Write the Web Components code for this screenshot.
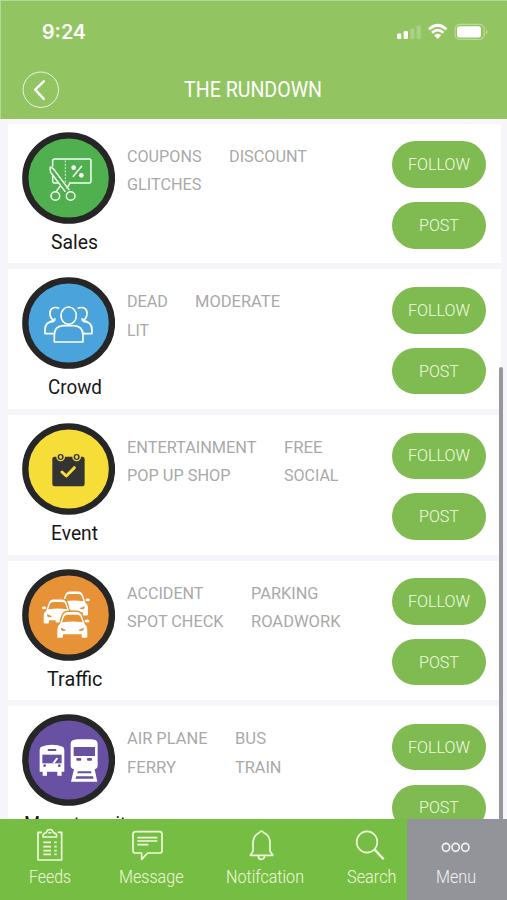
<!DOCTYPE html>
<html lang="en">
<head>
<meta charset="utf-8">
<title>The Rundown</title>
<style>
html,body{margin:0;height:100%;overflow:hidden}
body{font-family:Roboto,"Liberation Sans",sans-serif;background:#f6f6fa}
</style>
</head>
<body>
<rundown-app></rundown-app>
<script>
const define = (name, html, init) => customElements.define(name, class extends HTMLElement {
  connectedCallback() {
    if (this.shadowRoot) return;
    const t = document.createElement('template');
    t.innerHTML = typeof html === 'function' ? html(this) : html;
    this.attachShadow({mode: 'open'}).append(t.content.cloneNode(true));
    if (init) init(this);
  }
});

// A single line of text scaled horizontally to the width in its "w" attribute.
define('fit-text', `<style>
:host{display:block;white-space:nowrap}
span{display:inline-block;transform-origin:0 50%}
</style><span><slot></slot></span>`, el => {
  const w = +el.getAttribute('w'), s = el.shadowRoot.querySelector('span');
  el.style.width = w + 'px';
  s.style.transform = `scaleX(${w / s.getBoundingClientRect().width})`;
});

const badges = {
sales: ['#50b050', '36 20 280 276', `<g fill="none" stroke="#f4fff0" stroke-width="4.5" stroke-linejoin="round" stroke-linecap="round">
<path d="M128 122V107Q128 101 134 101H238Q243 101 243 107V167Q243 173 238 173H178M128 152V166Q128 173 135 173H146"/>
<path d="M166 107V172" stroke-width="3" stroke-dasharray="3 7"/>
<path d="M121 125Q119 132 122 141L165 198M121 125L130 130L177 193M178 177L171 188M152 181L138 199"/>
<circle cx="136" cy="212" r="13"/><circle cx="182" cy="212" r="13"/>
<path d="M215 123L190 153"/></g><circle cx="191" cy="127" r="7" fill="#fff"/><circle cx="214" cy="150" r="7" fill="#fff"/>`],
crowd: ['#4aa3da', '36 20 280 276', `<g fill="#4aa3da" stroke="#fff" stroke-width="5" stroke-linejoin="round">
<g id="side"><path d="M132 153Q105 153 105 178V190H131"/><path d="M148 114C128 106 118 119 120 132Q122 148 136 151"/><path d="M136 144Q131 153 120 154" fill="none"/></g>
<use href="#side" transform="translate(351 0) scale(-1 1)"/>
<path d="M133 215V194Q133 167 161 166H190Q219 167 219 194V215Z"/>
<ellipse cx="176" cy="136" rx="23" ry="26"/></g>`],
event: ['#f7dd38', '36 20 280 276', `<rect x="127" y="121" width="97" height="89" rx="7" fill="#333"/>
<g fill="#333" stroke="#f7dd38" stroke-width="4"><circle cx="152" cy="122" r="11"/><circle cx="200" cy="122" r="11"/></g><rect x="148" y="117" width="8" height="10" rx="3" fill="#f7dd38"/><rect x="196" y="117" width="8" height="10" rx="3" fill="#f7dd38"/>
<path d="M156 167L169 179L193 154" fill="none" stroke="#f7dd38" stroke-width="9" stroke-linecap="round" stroke-linejoin="round"/>`],
traffic: ['#e89237', '36 26 280 276', `<defs><g id="car"><path d="M-37 -2L-29 -26Q-25 -37 -14 -38H14Q25 -37 29 -26L37 -2Q45 3 45 14V36Q45 39 42 39H31Q28 39 28 36V29H-28V36Q-28 39 -31 39H-42Q-45 39 -45 36V14Q-45 3 -37 -2Z" fill="#fff" stroke="#e89237" stroke-width="9" paint-order="stroke"/><ellipse cx="-44" cy="-11" rx="7" ry="4.5" fill="#fff"/><ellipse cx="44" cy="-11" rx="7" ry="4.5" fill="#fff"/><path d="M-31 -7L-24 -25Q-22 -30 -14 -30H14Q22 -30 24 -25L31 -7Q0 -12 -31 -7Z" fill="#e89237"/><path d="M-34 9L-18 16Q-27 22 -34 16ZM34 9L18 16Q27 22 34 16Z" fill="#e89237"/></g></defs>
<use href="#car" transform="translate(192 129) scale(.93)"/>
<use href="#car" transform="translate(143 153) scale(.93)"/>
<use href="#car" transform="translate(187 193)"/>`],
transit: ['#6850a2', '36 42 280 276', `<path d="M92 141Q127 128 160 141L163 149V215H155V227H142V215H111V227H98V215H89V149Z" fill="#fff"/>
<g fill="#6850a2"><rect x="113" y="147" width="26" height="6" rx="2"/><path d="M97 164H155V190H97Z"/><circle cx="104" cy="197" r="4"/><circle cx="148" cy="197" r="4"/></g><path d="M97 190H127L139 173L145 175L134 190" fill="#fff"/>
<path d="M182 131Q182 119 202 118H245Q263 119 263 131V197Q263 205 254 208L262 245H183L192 208Q182 205 182 197Z" fill="#fff"/>
<g fill="#6850a2"><rect x="191" y="141" width="64" height="27"/><rect x="199" y="174" width="15" height="8" rx="3"/><rect x="231" y="174" width="15" height="8" rx="3"/><path d="M204 214H243L245 220H201ZM199 229H249L251 236H196Z"/></g>`]
};

define('category-badge', el => {
  const [c, vb, art] = badges[el.getAttribute('kind')];
  const [x, y, w, h] = vb.split(' ').map(Number);
  return `<style>:host{display:block;width:93.3px;height:92px}svg{display:block;width:100%;height:100%}</style>
<svg viewBox="${vb}"><ellipse cx="${x + w / 2}" cy="${y + h / 2}" rx="130" ry="128" fill="${c}" stroke="#262626" stroke-width="19"/>${art}</svg>`;
});

define('pill-button', `<style>
:host{display:flex;align-items:center;justify-content:center;box-sizing:border-box;width:94px;height:46.5px;padding-top:1px;border-radius:24px;background:#7fbb51;color:#f1fde2;font-size:16px;font-weight:300;line-height:20px}
</style><slot></slot>`);

define('category-card', el => `<style>
:host{display:flex;box-sizing:border-box;height:139.6px;background:#fff;padding:8px 14.5px 0 14px}
.id{width:104.6px;flex:none}
.cap{display:flex;justify-content:center;width:120px;margin:7px 0 0 -7.5px;font-size:19.5px;line-height:24px;color:#171717}
.tags{display:grid;grid-template-columns:auto auto;grid-auto-rows:28.4px;column-gap:27.5px;margin-top:11px;align-content:start;justify-content:start;flex:1;font-size:16.6px;line-height:28.4px;color:#a9a9a9}
.acts{display:flex;flex-direction:column;gap:14.2px;margin-top:9.7px}
</style>
<div class="id"><category-badge kind="${el.getAttribute('kind')}"></category-badge><div class="cap"><slot name="caption"></slot></div></div>
<div class="tags"><slot></slot></div>
<div class="acts"><pill-button><fit-text w="62">FOLLOW</fit-text></pill-button><pill-button><fit-text w="40">POST</fit-text></pill-button></div>`);

define('status-bar', `<style>
:host{display:flex;justify-content:space-between;height:64px;padding:0 19px 0 41px;color:#fff}
fit-text{font:600 19.5px/24px Inter,sans-serif;margin-top:19px}
svg{margin-top:18.5px}
</style><fit-text w="44">9:24</fit-text>
<svg width="92" height="24" viewBox="396 20 92 24" fill="#fff">
<rect x="397" y="33.5" width="4.3" height="5.5" rx="1.3"/><rect x="403.6" y="31" width="4.3" height="8" rx="1.3"/><g opacity=".22"><rect x="410.3" y="28.5" width="4.2" height="10.5" rx="1.3"/><rect x="416.6" y="25.5" width="4.2" height="13.5" rx="1.3"/></g>
<g fill="none" stroke="#fff" stroke-width="2.7"><path d="M429 29.2Q437.7 21.3 446.4 29.2M432 32.7Q437.7 27.7 443.4 32.7"/></g><path d="M434.2 35.3Q437.7 32.4 441.2 35.3L437.7 39Z"/>
<rect x="455.2" y="24.3" width="29" height="15" rx="4.5" fill="none" stroke="#fff" stroke-opacity=".45"/><rect x="457" y="26.2" width="24" height="11.2" rx="2.5"/><path d="M486 29.5Q489 32 486 34.5Z" opacity=".45"/></svg>`);

define('page-header', `<style>
:host{display:block;box-sizing:border-box;height:119.3px;background:#92c562;border-top:1.5px solid #b4d994;border-left:1.5px solid #b4d994}
.row{display:grid;grid-template-columns:38px 1fr 38px;padding:5.5px 22px 0 20.5px;align-items:center;color:#fff}
.t{display:flex;justify-content:center;font-size:22.6px;line-height:26px}
svg{display:block}
</style><status-bar></status-bar><div class="row"><svg width="38" height="38" fill="none" stroke="#fff"><circle cx="18.8" cy="18.7" r="17.7" stroke="#eaf6dc"/><path d="M21.8 10.3L13.2 18.7L21.8 27.8" stroke-width="2.5" stroke-linecap="round" stroke-linejoin="round"/></svg><div class="t"><fit-text w="138"><slot></slot></fit-text></div></div>`);

const glyphs = {
feeds: ['108 52 84 104', '<path d="M126 68H114V151H185V68H173" stroke-width="5"/><path d="M129 82H170V77Q169 70 160 69C158 56 141 56 139 69Q130 70 129 77ZM145 69H154" stroke-width="4.5"/><path d="M130 98H153M130 111H153M130 123H153M130 134H153M163 98H170M163 111H170M163 123H170M163 134H170" stroke-width="5"/>'],
message: ['394 52 118 104', '<path d="M408 66H480Q487 66 487 73V124Q487 130 480 130H444L426 149V130H407Q400 130 400 124V73Q400 66 408 66ZM413 84H473M413 94H473M413 105H446" stroke-width="5"/>'],
bell: ['-18 52 100 104', '<path d="M-11 137H57L48 125V98Q47 76 29 69Q22 60 16 69Q-1 76 -3 98V125ZM13 139Q13 149 22 149Q31 149 32 139" stroke-width="5"/>'],
search: ['300 52 108 104', '<ellipse cx="339" cy="97" rx="31" ry="32" stroke-width="5"/><path d="M362 120L389 149" stroke-width="7"/>'],
menu: ['562 52 94 104', '<g stroke-width="5"><ellipse cx="580" cy="113" rx="11" ry="12"/><ellipse cx="609" cy="113" rx="11" ry="12"/><ellipse cx="638" cy="113" rx="11" ry="12"/></g>']
};
define('nav-item', el => {
  const [vb, art] = glyphs[el.getAttribute('icon')], p = vb.split(' ');
  return `<style>
:host{display:flex;flex-direction:column;align-items:center;box-sizing:border-box;height:100%;padding-top:8px;color:#effbdc;font-size:18px;font-weight:300;line-height:24px}
:host([active]){background:#939499;color:#f2f2f2;padding-right:2px}
:host([icon=search]){padding-left:9px}
svg{display:block}fit-text{margin-top:3px}
</style><svg width="${p[2] / 3}" height="${p[3] / 3}" viewBox="${vb}" fill="none" stroke="currentColor" stroke-width="4" stroke-linejoin="round">${art}</svg><fit-text w="${el.getAttribute('w')}"><slot></slot></fit-text>`;
});

define('tab-bar', `<style>
:host{display:grid;grid-template-columns:100px 102px 126px 78.7px 1fr;height:80.6px;background:#76be43}
</style><slot></slot>`);

const cards = [
['sales', 'Sales', 47, [['COUPONS', 74.5], ['DISCOUNT', 78], ['GLITCHES', 74.5]]],
['crowd', 'Crowd', 54, [['DEAD', 41], ['MODERATE', 85], ['LIT', 22]]],
['event', 'Event', 47, [['ENTERTAINMENT', 129.5], ['FREE', 38.5], ['POP UP SHOP', 103.5], ['SOCIAL', 54.5]]],
['traffic', 'Traffic', 55.5, [['ACCIDENT', 76.5], ['PARKING', 67.5], ['SPOT CHECK', 96.5], ['ROADWORK', 89.5]]],
['transit', 'Mass transit', 102, [['AIR PLANE', 80.5], ['BUS', 31], ['FERRY', 49], ['TRAIN', 46.5]]]
];
define('rundown-app', `<style>
:host{display:flex;flex-direction:column;position:relative;width:507px;height:900px;overflow:hidden;background:#f6f6fa}
main{flex:1;min-height:0;overflow:hidden;display:flex;flex-direction:column;gap:6px;padding:4.5px 6.5px 0 8px}
category-card{flex:none}
.bar{position:absolute;left:499px;top:367px;width:4px;height:460px;border-radius:2px;background:#98989b}
tab-bar{position:relative;flex:none}
</style>
<page-header>THE RUNDOWN</page-header>
<main>${cards.map(([k, n, w, tags]) => `<category-card kind="${k}"><fit-text slot="caption" w="${w}">${n}</fit-text>${tags.map(t => `<fit-text w="${t[1]}">${t[0]}</fit-text>`).join('')}</category-card>`).join('')}</main>
<div class="bar"></div>
<tab-bar><nav-item icon="feeds" w="42">Feeds</nav-item><nav-item icon="message" w="64.5">Message</nav-item><nav-item icon="bell" w="78">Notifcation</nav-item><nav-item icon="search" w="49.5">Search</nav-item><nav-item icon="menu" w="40" active>Menu</nav-item></tab-bar>`);
</script>
</body>
</html>
